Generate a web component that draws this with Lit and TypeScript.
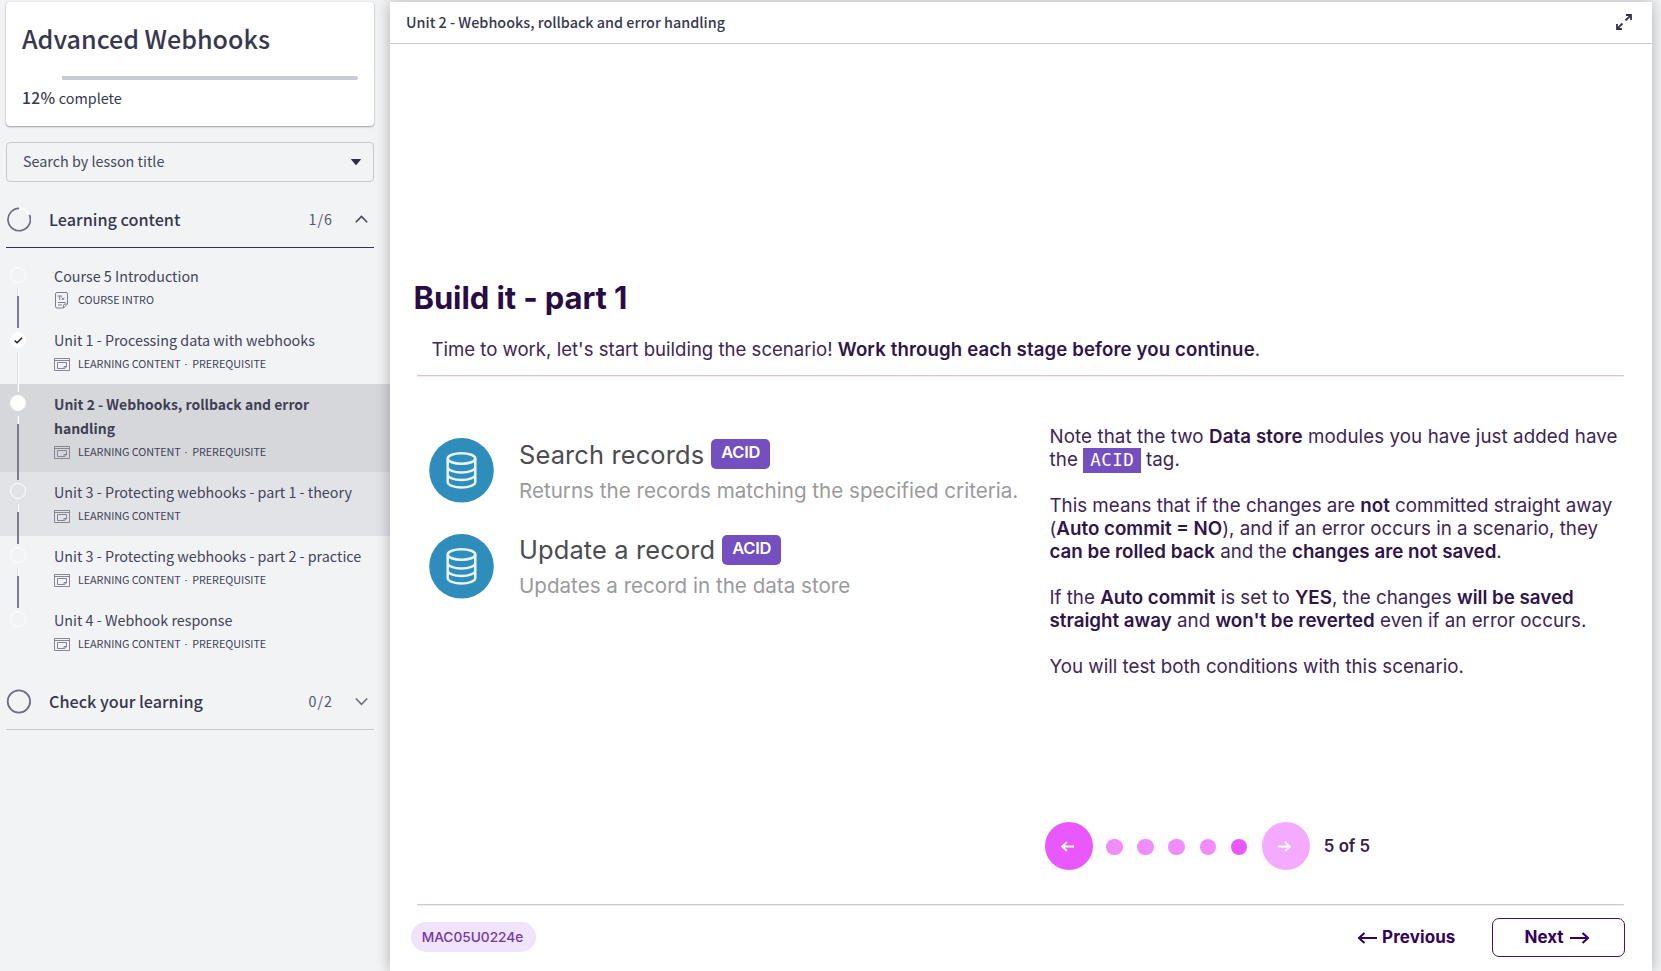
import { LitElement, html, css, svg, nothing } from "lit";
import { customElement, property } from "lit/decorators.js";
import { classMap } from "lit/directives/class-map.js";

interface Lesson {
  title: string;
  kind: string;
  prerequisite?: boolean;
  doc?: boolean;
  status: "open" | "done" | "current";
  hover?: boolean;
  last?: boolean;
}

const LESSONS: Lesson[] = [
  { title: "Course 5 Introduction", kind: "COURSE INTRO", doc: true, status: "open" },
  { title: "Unit 1 - Processing data with webhooks", kind: "LEARNING CONTENT", prerequisite: true, status: "done" },
  { title: "Unit 2 - Webhooks, rollback and error handling", kind: "LEARNING CONTENT", prerequisite: true, status: "current" },
  { title: "Unit 3 - Protecting webhooks - part 1 - theory", kind: "LEARNING CONTENT", status: "open", hover: true },
  { title: "Unit 3 - Protecting webhooks - part 2 - practice", kind: "LEARNING CONTENT", prerequisite: true, status: "open" },
  { title: "Unit 4 - Webhook response", kind: "LEARNING CONTENT", prerequisite: true, status: "open", last: true },
];

const docIcon = html`<svg width="16" height="17" viewBox="0 0 16 17" fill="none" stroke="#7b7b8c" stroke-width="1">
  <path d="M3 .5h9q1.500 0 1.500 1.500v10l-4 4h-6.500q-1.500 0-1.500-1.500v-12.500q0-1.500 1.500-1.500zM13.500 12h-2.500q-1.500 0-1.500 1.500v2.500" />
  <path d="M3.500 4h4.500M5.700 4v4M7.700 5.500l2.500 2.500M10.200 5.500l-2.500 2.500M4 10.500h7.500M4 13h4" />
</svg>`;

const windowIcon = html`<svg width="16" height="13" viewBox="0 0 16 13" fill="none" stroke="#858593" stroke-width="1">
  <path d="M.5 .5h15v12h-15zM.5 2.500h15M3.500 4.500h9v4.500l-2 1.500h-7z" />
  <path d="M12.500 8.500h-2.500v2" />
</svg>`;

@customElement("lesson-row")
export class LessonRow extends LitElement {
  @property({ attribute: false }) lesson!: Lesson;

  static styles = css`
    :host { display: block; }
    .row { display: grid; grid-template-columns: 54px 1fr; padding-right: 24px; }
    .row.current { background: #d6d7db; }
    .row.hover { background: #e2e3e7; }
    .track { display: flex; flex-direction: column; align-items: center; width: 16px; margin: 11px 0 -8px 10px; z-index: 1; }
    .dot { width: 16px; height: 16px; box-sizing: border-box; border: 1px solid #fff; border-radius: 50%; flex: none; display: flex; align-items: center; justify-content: center; }
    .done .dot { margin: 1px 0 -1px; }
    .done .dot, .current .dot { background: #fff; }
    .line { flex: 1; width: 2px; margin: 5px 0 0; background: #7c7c8d; display: flex; flex-direction: column; }
    .line i { display: block; height: 8px; width: 1px; background: #dfdfe3; border-right: 1px solid #fff; }
    .done .line i { flex: 1; }
    .body { padding: 8px 0 8px; color: #42435a; }
    .title { font-size: 14.32px; line-height: 24px; }
    .current .title { font-weight: 700; font-size: 13.95px; color: #3e3f55; }
    .meta { display: flex; align-items: center; height: 24px; font-size: 10.8px; line-height: 22px; gap: 8px; white-space: pre; letter-spacing: -0.06px; }
    .meta svg { display: block; flex: none; }
    .meta > span { margin-top: -2px; }
    .sep { font-family: "Open Sans", sans-serif; letter-spacing: 1px; }
  `;

  render() {
    const l = this.lesson;
    return html`<div class=${classMap({ row: true, current: l.status === "current", done: l.status === "done", hover: !!l.hover })}>
      <div class="track">
        <div class="dot">
          ${l.status === "done"
            ? html`<svg width="9" height="7" viewBox="0 0 9 7" fill="none" stroke="#222" stroke-width="1.500"><path d="M.6 3.500l2.500 2.300 5-5" /></svg>`
            : nothing}
        </div>
        ${l.last ? nothing : html`<div class="line"><i></i></div>`}
      </div>
      <div class="body">
        <div class="title">${l.title}</div>
        <div class="meta">${l.doc ? docIcon : windowIcon}<span>${l.kind}${l.prerequisite ? html`<span class="sep"> · </span>PREREQUISITE` : nothing}</span></div>
      </div>
    </div>`;
  }
}

@customElement("course-sidebar")
export class CourseSidebar extends LitElement {
  static styles = css`
    :host { display: block; box-sizing: border-box; padding-top: 2px; color: #37384e; font-family: "Noto Sans CJK SC", sans-serif; }
    .card { margin: 0 16px 0 6px; height: 124px; box-sizing: border-box; padding: 20px 16px 0; background: #fff; border-radius: 4px; box-shadow: 0 1px 2px rgba(0, 0, 0, 0.35), 0 0 1px rgba(0, 0, 0, 0.15); }
    h1 { margin: 0; font-size: 25.1px; line-height: 32px; font-weight: 500; white-space: nowrap; }
    .bar { margin-top: 22px; height: 4px; display: flex; }
    .rest { flex: 1; background: #c9cbd4; border-radius: 0 2px 2px 0; }
    .pct { margin-top: 7px; font-size: 14.35px; line-height: 20px; }
    .pct b { font-weight: 500; font-size: 15.600px; letter-spacing: 0.4px; }
    .search { margin: 16px 16px 0 6px; height: 40px; box-sizing: border-box; border: 1px solid #c6c8d2; border-radius: 4px; padding: 0 12px 2px 16px; display: flex; align-items: center; justify-content: space-between; font-size: 14.35px; line-height: 20px; color: #46475c; }
    .search svg { margin-top: 1px; }
    .group { margin: 10px 16px 0 6px; height: 56px; box-sizing: border-box; border-bottom: 1px solid #33344a; padding-right: 6px; display: flex; align-items: center; }
    .group.closed { border-color: #c8cad0; }
    .group svg { display: block; flex: none; }
    .name { margin: -2px 0 0 18px; flex: 1; font-size: 16.2px; font-weight: 500; }
    .count { font-size: 14.3px; letter-spacing: 1px; color: #55566a; margin: -3px 22px 0 0; }
    .lessons { padding-top: 8px; }
  `;

  render() {
    return html`
      <div class="card">
        <h1>Advanced Webhooks</h1>
        <div class="bar"><div style="width:12%"></div><div class="rest"></div></div>
        <div class="pct"><b>12%</b> complete</div>
      </div>
      <div class="search">Search by lesson title
        <svg width="10" height="6" viewBox="0 0 10 6"><path d="M.3 0h9.400q.3.300 0 .7l-4.200 5q-.5.500-1 0l-4.200-5q-.3-.4 0-.7z" fill="#2d2e44" /></svg>
      </div>
      <div class="group">
        <svg width="25" height="25" viewBox="0 0 25 25" fill="none" stroke-width="1.700"><path d="M13.500 1.300a11.200 11.200 0 0 1 9.600 6.600" stroke="#fff" /><path d="M24 7.900a11.200 11.200 0 1 1-10.300-6.600" transform="translate(-.6 0)" stroke="#6c6d80" /></svg>
        <span class="name">Learning content</span><span class="count">1/6</span>
        <svg width="13" height="9" viewBox="0 0 13 9" fill="none" stroke="#45465b" stroke-width="1.600"><path d="M.8 7.300l5.700-5.800 5.700 5.800" /></svg>
      </div>
      <div class="lessons">${LESSONS.map((l) => html`<lesson-row .lesson=${l}></lesson-row>`)}</div>
      <div class="group closed">
        <svg width="25" height="25" viewBox="0 0 25 25" fill="none" stroke-width="1.800"><circle cx="12.900" cy="12.500" r="11.200" stroke="#6c6d80" /></svg>
        <span class="name">Check your learning</span><span class="count">0/2</span>
        <svg width="13" height="9" viewBox="0 0 13 9" fill="none" stroke="#6c6d80" stroke-width="1.600"><path d="M.8 1.500l5.700 5.800 5.700-5.800" /></svg>
      </div>`;
  }
}

const arrow = (right: boolean, w: number, h: number, sw: number) => {
  const m = h / 2;
  return html`<svg width=${w} height=${h} viewBox="0 0 ${w} ${h}" fill="none" stroke="currentColor" stroke-width=${sw}>
    ${right
      ? svg`<path d="M0 ${m}H${w - 1}M${w - m - 0.5} 1L${w - 1} ${m}L${w - m - 0.5} ${h - 1}" />`
      : svg`<path d="M${w} ${m}H1M${m + 0.5} 1L1 ${m}L${m + 0.5} ${h - 1}" />`}
  </svg>`;
};

@customElement("unit-slide")
export class UnitSlide extends LitElement {
  static styles = css`
    :host { display: flex; flex-direction: column; background: #fff; box-shadow: 0 0 14px rgba(0, 0, 0, 0.28); font-family: Inter, sans-serif; color: #3c2656; }
    .top { height: 42px; box-sizing: border-box; flex: none; border-bottom: 1px solid #c8c9d3; padding: 0 20px 2px 16px; display: flex; align-items: center; justify-content: space-between; font: 500 14.38px/20px "Noto Sans CJK SC", sans-serif; color: #37384e; }
    .slide { flex: 1; padding: 236px 28px 0 27px; display: flex; flex-direction: column; }
    h2 { margin: 0 0 0 -3.500px; font-size: 31px; line-height: 36px; font-weight: 700; letter-spacing: -0.1px; color: #2a0c44; }
    .lead { margin: 21px 0 14px 14.500px; font-size: 18.58px; line-height: 24px; height: 24px; white-space: nowrap; }
    .lead b { letter-spacing: 0.14px; }
    b { font-weight: 600; color: #2f154a; }
    .rule { height: 1px; background: #d0c8cc; box-shadow: 0 1px 0 #f1edef; flex: none; }
    .cols { display: grid; grid-template-columns: 632.500px 1fr; height: 528px; flex: none; }
    .right { display: flex; flex-direction: column; }
    .modules { padding: 62.300px 0 0 11.500px; display: flex; flex-direction: column; gap: 31px; }
    .module { display: grid; grid-template-columns: 65px 1fr; column-gap: 25.500px; height: 64.500px; white-space: nowrap; }
    .name { display: flex; gap: 7px; font-size: 25.4px; line-height: 32px; letter-spacing: 0.15px; color: #4c4c50; padding-top: 0.500px; }
    .acid { margin-top: 0.500px; height: 30px; border-radius: 5px; background: #744fc0; color: #fff; font-size: 16.5px; line-height: 27px; letter-spacing: -0.3px; font-weight: 600; padding: 0 9.500px 0 10px; }
    .desc { font-size: 20.6px; line-height: 24px; margin-top: 8px; color: #9a9a9c; }
    .notes { height: 278px; padding-top: 48.500px; font-size: 18.74px; line-height: 23.06px; white-space: nowrap; }
    .notes p { margin: 0 0 23.06px; }
    .notes p:first-child { letter-spacing: 0.09px; }
    .tag { background: #744fc0; color: #fff; font: 400 17.5px/1 "DejaVu Sans Mono", monospace; letter-spacing: 0.5px; padding: 2px 6.500px 3px 7px; margin-right: 5px; }
    .pager { margin: 119.500px 0 0 -5px; display: flex; align-items: center; }
    .round { width: 48px; height: 48px; box-sizing: border-box; padding-right: 1.500px; border-radius: 50%; background: #e957ff; color: #fff; display: flex; align-items: center; justify-content: center; flex: none; }
    .round.off { background: #f4abff; padding-right: 3px; }
    .dots { display: flex; gap: 14.600px; margin: 2px 14.500px 0 13.500px; }
    .dots i { width: 16.600px; height: 16.600px; border-radius: 50%; background: #f18cff; }
    .dots i:last-child { background: #e957ff; }
    .pos { margin-left: 14px; font-size: 16.8px; font-weight: 600; color: #35204c; }
    .foot { display: flex; align-items: center; margin: 13px 0 0 -6px; height: 39px; color: #36005f; font-size: 17px; font-weight: 700; }
    .pill { background: #efe4fb; border-radius: 15px; height: 30px; line-height: 30px; width: 125px; box-sizing: border-box; padding-right: 2px; text-align: center; color: #7536a8; font-size: 13.7px; font-weight: 500; margin: -2px auto 0 0; }
    .prev { display: flex; align-items: center; gap: 5px; margin-right: 36.500px; padding-bottom: 1px; letter-spacing: 0.1px; }
    .next { box-sizing: border-box; width: 133px; height: 39px; border: 1.500px solid #431070; border-radius: 7px; display: flex; align-items: center; justify-content: center; gap: 6px; margin-right: -1px; padding: 0 4px 1px 0; }
    .prev svg, .next svg { margin-top: 1px; }
  `;

  private module(name: string, desc: string) {
    return html`<div class="module">
      <svg width="65" height="65" viewBox="0 0 65 65">
        <circle cx="32.500" cy="32.300" r="32.300" fill="#2f8dbb" />
        <g fill="none" stroke="#e8f4fa" stroke-width="2.500">
          <ellipse cx="32.500" cy="20.500" rx="13.800" ry="5.300" />
          <path d="M18.700 20.500v23.500c0 3 6.200 5.500 13.800 5.500s13.800-2.500 13.800-5.500v-23.500M18.700 29c0 3 6.200 5.500 13.800 5.500s13.800-2.500 13.800-5.500M18.700 36.500c0 3 6.200 5.500 13.800 5.500s13.800-2.500 13.800-5.500" />
        </g>
      </svg>
      <div>
        <div class="name">${name}<span class="acid">ACID</span></div>
        <div class="desc">${desc}</div>
      </div>
    </div>`;
  }

  render() {
    return html`
      <div class="top"><span>Unit 2 - Webhooks, rollback and error handling</span>
        <svg width="16" height="16" viewBox="0 0 16 16" fill="none" stroke="#33344a" stroke-width="1.800"><path d="M9.500 6.500l5.200-5.200M10 1h5v5M6.500 9.500l-5.200 5.200M1 10v5h5" /></svg>
      </div>
      <div class="slide">
        <h2>Build it - part 1</h2>
        <div class="lead">Time to work, let's start building the scenario! <b>Work through each stage before you continue</b>.</div>
        <div class="rule"></div>
        <div class="cols">
          <div class="modules">
            ${this.module("Search records", "Returns the records matching the specified criteria.")}
            ${this.module("Update a record", "Updates a record in the data store")}
          </div>
          <div class="right">
            <div class="notes">
              <p>Note that the two <b>Data store</b> modules you have just added have<br />the <span class="tag">ACID</span>tag.</p>
              <p>This means that if the changes are <b>not</b> committed straight away<br />(<b>Auto commit = NO</b>), and if an error occurs in a scenario, they<br /><b>can be rolled back</b> and the <b>changes are not saved</b>.</p>
              <p>If the <b>Auto commit</b> is set to <b>YES</b>, the changes <b>will be saved<br />straight away</b> and <b>won't be reverted</b> even if an error occurs.</p>
              <p>You will test both conditions with this scenario.</p>
            </div>
            <div class="pager">
              <span class="round">${arrow(false, 13, 11, 1.8)}</span>
              <span class="dots">${[1, 2, 3, 4, 5].map(() => html`<i></i>`)}</span>
              <span class="round off">${arrow(true, 13, 11, 1.8)}</span>
              <span class="pos">5 of 5</span>
            </div>
          </div>
        </div>
        <div class="rule"></div>
        <div class="foot">
          <span class="pill">MAC05U0224e</span>
          <span class="prev">${arrow(false, 19, 12, 2)}Previous</span>
          <span class="next">Next${arrow(true, 19, 12, 2)}</span>
        </div>
      </div>`;
  }
}

@customElement("app-root")
export class AppRoot extends LitElement {
  static styles = css`
    :host { display: block; height: 100vh; overflow: hidden; background: #f1f3f5; }
    .layout { display: grid; grid-template-columns: 390px 1262px; height: 100%; }
    unit-slide { margin-top: 2px; z-index: 2; }
  `;
  render() {
    return html`<div class="layout"><course-sidebar></course-sidebar><unit-slide></unit-slide></div>`;
  }
}
